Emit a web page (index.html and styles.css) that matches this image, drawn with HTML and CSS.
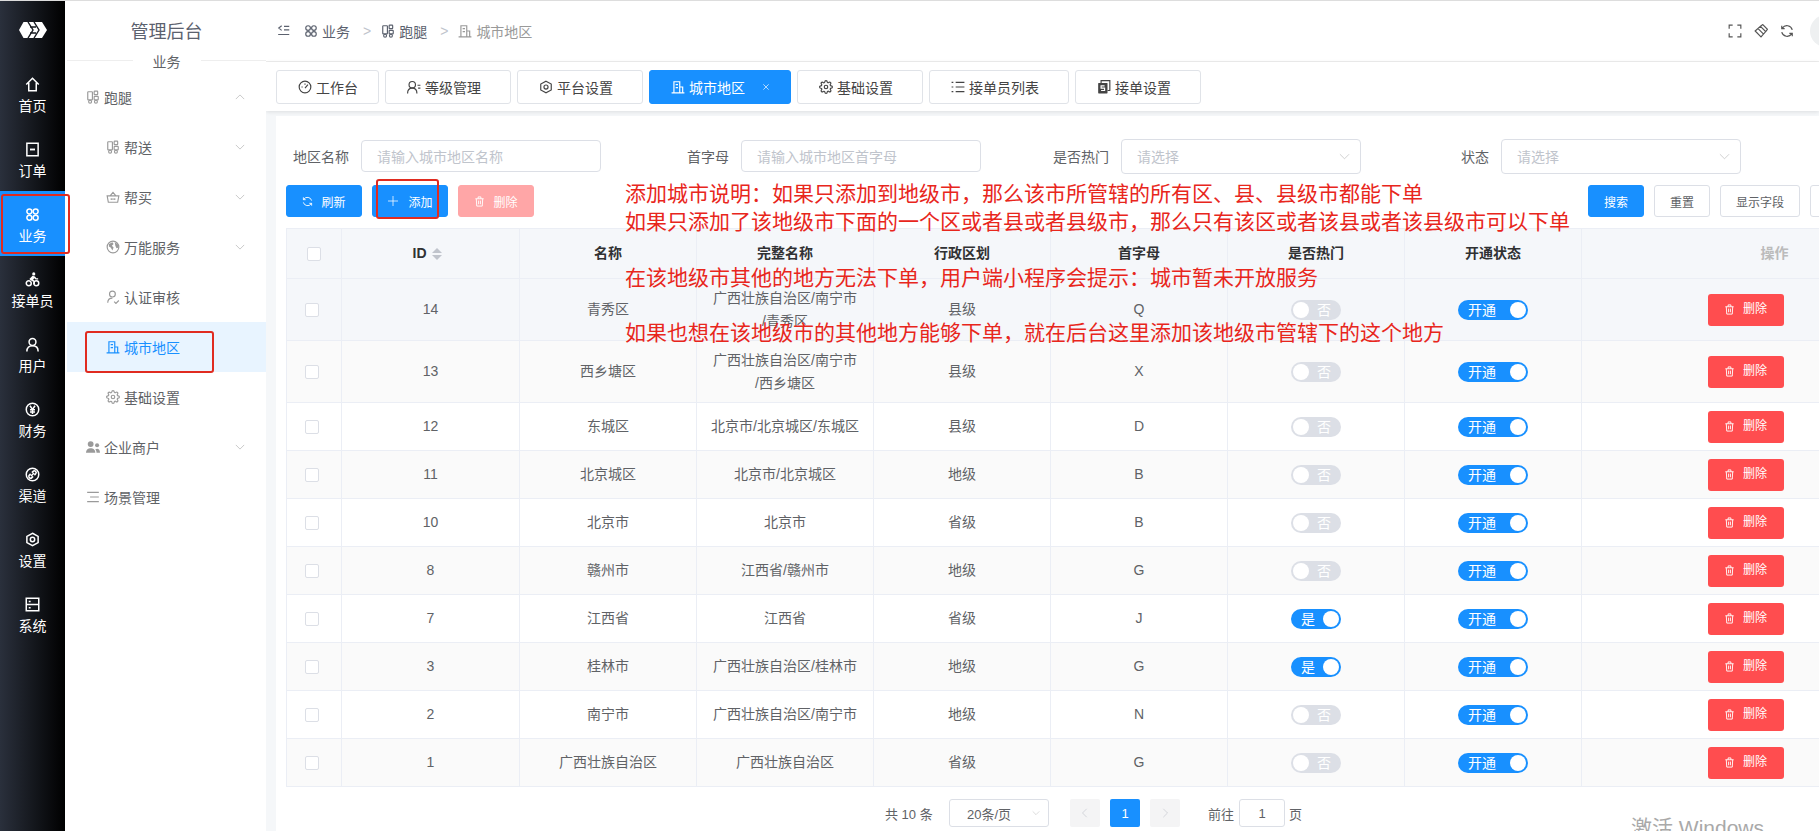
FILE: index.html
```html
<!DOCTYPE html>
<html lang="zh-CN">
<head>
    <meta charset="UTF-8" />
    <title>管理后台</title>
    <link rel="stylesheet" href="styles.css">
</head>
<body>
<!-- 图标 -->
<svg class="icon-defs" xmlns="http://www.w3.org/2000/svg">
    <symbol id="i-home" viewBox="0 0 24 24"><path d="M2 12L12 2l10 10M6 9v13h12V9"/></symbol>
    <symbol id="i-order" viewBox="0 0 24 24"><rect x="3" y="2" width="18" height="20"/><path d="M8 12h8" stroke-width="3"/></symbol>
    <symbol id="i-apps" viewBox="0 0 24 24"><circle cx="7" cy="7" r="4"/><circle cx="17" cy="7" r="4"/><circle cx="7" cy="17" r="4"/><circle cx="17" cy="17" r="4"/></symbol>
    <symbol id="i-rider" viewBox="0 0 24 24"><circle cx="6" cy="18" r="4"/><circle cx="18" cy="18" r="4"/><circle cx="14" cy="3" r="2.5" class="solid"/><path class="solid" d="M7 11l5-5 4 1 2 3h3v2h-4l-2-2-2 2 3 3v4h-2v-3l-5-3z"/></symbol>
    <symbol id="i-user" viewBox="0 0 24 24"><circle cx="12" cy="8" r="5.5"/><path d="M3 23c0-6 4-9 9-9s9 3 9 9"/></symbol>
    <symbol id="i-yen" viewBox="0 0 24 24"><circle cx="12" cy="12" r="10"/><path d="M8 6l4 6 4-6M12 12v7M8 12.5h8M8 16h8"/></symbol>
    <symbol id="i-link" viewBox="0 0 24 24"><circle cx="12" cy="12" r="10"/><path d="M9.5 14.5l5-5M9 11l-2 2a2.8 2.8 0 0 0 4 4l2-2M15 13l2-2a2.8 2.8 0 0 0-4-4l-2 2"/></symbol>
    <symbol id="i-hex" viewBox="0 0 24 24"><path d="M12 2l9 5v10l-9 5-9-5V7z"/><circle cx="12" cy="12" r="3.5"/></symbol>
    <symbol id="i-server" viewBox="0 0 24 24"><rect x="2" y="2" width="20" height="20"/><path d="M2 12h20M6 7h3M6 17h3"/></symbol>
    <symbol id="i-run" viewBox="0 0 24 24"><rect x="3" y="3" width="8" height="14" rx="1"/><rect x="14" y="2" width="6" height="6" rx="1"/><rect x="14" y="11" width="7" height="6" rx="1"/><circle cx="7" cy="20" r="2.5"/><circle cx="17" cy="20" r="2.5"/></symbol>
    <symbol id="i-basket" viewBox="0 0 24 24"><path d="M2 10h20l-2 11H4zM7 10l5-6 5 6M9 14v3M12 14v3M15 14v3"/></symbol>
    <symbol id="i-globe" viewBox="0 0 24 24"><circle cx="12" cy="12" r="10"/><path class="solid" d="M5 7l6-3 2 3-3 3 3 3-2 5-3-5-3-2zM15 4l5 3 2 6-4 1-2-4z"/></symbol>
    <symbol id="i-usercheck" viewBox="0 0 24 24"><circle cx="11" cy="7" r="5"/><path d="M3 22c0-5 3-8 8-8M14 20l3 3 5-5"/></symbol>
    <symbol id="i-building" viewBox="0 0 24 24"><path d="M5 21V3h10v18M15 12h5v9M8 8h4M8 13h4M1 22h22"/></symbol>
    <symbol id="i-gear" viewBox="0 0 24 24"><circle cx="12" cy="12" r="3"/><path d="M19.4 15a1.65 1.65 0 0 0 .33 1.82l.06.06a2 2 0 0 1 0 2.83 2 2 0 0 1-2.83 0l-.06-.06a1.65 1.65 0 0 0-1.82-.33 1.65 1.65 0 0 0-1 1.51V21a2 2 0 0 1-2 2 2 2 0 0 1-2-2v-.09A1.65 1.65 0 0 0 9 19.4a1.65 1.65 0 0 0-1.82.33l-.06.06a2 2 0 0 1-2.83 0 2 2 0 0 1 0-2.83l.06-.06a1.65 1.65 0 0 0 .33-1.82 1.65 1.65 0 0 0-1.51-1H3a2 2 0 0 1-2-2 2 2 0 0 1 2-2h.09A1.65 1.65 0 0 0 4.6 9a1.65 1.65 0 0 0-.33-1.82l-.06-.06a2 2 0 0 1 0-2.83 2 2 0 0 1 2.83 0l.06.06a1.65 1.65 0 0 0 1.82.33H9a1.65 1.65 0 0 0 1-1.51V3a2 2 0 0 1 2-2 2 2 0 0 1 2 2v.09a1.65 1.65 0 0 0 1 1.51 1.65 1.65 0 0 0 1.82-.33l.06-.06a2 2 0 0 1 2.83 0 2 2 0 0 1 0 2.83l-.06.06a1.65 1.65 0 0 0-.33 1.82V9a1.65 1.65 0 0 0 1.51 1H21a2 2 0 0 1 2 2 2 2 0 0 1-2 2h-.09a1.65 1.65 0 0 0-1.51 1z"/></symbol>
    <symbol id="i-users" viewBox="0 0 24 24"><circle class="solid" cx="8" cy="7" r="5"/><path class="solid" d="M0 22c0-6 4-8 8-8s8 2 8 8z"/><circle class="solid" cx="19" cy="9" r="3.5"/><path class="solid" d="M18 22h6c0-5-2-7-5-7-1 0-2 .3-3 1 1.500 2 2 4 2 6z"/></symbol>
    <symbol id="i-lines" viewBox="0 0 24 24"><path d="M2 4h20M7 12h15M2 20h20"/></symbol>
    <symbol id="i-collapse" viewBox="0 0 24 24"><path d="M8 3L3 7l5 4M12 4h9M12 10h9M2 18h19"/></symbol>
    <symbol id="i-gauge" viewBox="0 0 24 24"><circle cx="12" cy="12" r="10"/><path d="M12 14l5-6M6 12h2M12 6v2"/></symbol>
    <symbol id="i-userlines" viewBox="0 0 24 24"><circle cx="9" cy="8" r="5.500"/><path d="M1 23c0-6 3-9 8-9s8 3 8 9M18 9h5M19 14h4"/></symbol>
    <symbol id="i-list" viewBox="0 0 24 24"><path d="M8 4h15M8 12h15M8 20h15M1 4h3M1 12h3M1 20h3"/></symbol>
    <symbol id="i-copy" viewBox="0 0 24 24"><path d="M7 5V1h15v17h-4"/><rect class="solid" x="2" y="5" width="16" height="18" rx="1"/><path d="M13 10H7v4h6v4H7" stroke="#fff"/></symbol>
    <symbol id="i-full" viewBox="0 0 24 24"><path d="M2 8V2h6M16 2h6v6M22 16v6h-6M8 22H2v-6"/></symbol>
    <symbol id="i-clean" viewBox="0 0 24 24"><path d="M2 12l9-8 9 9-8 9zM7 8l9 9M11 4l4-3 8 8-3 4"/></symbol>
    <symbol id="i-refresh" viewBox="0 0 24 24"><path d="M21 10A9.500 9.500 0 0 0 4 7l-1 1M3 14a9.500 9.500 0 0 0 17 3l1-1M3 3v5h5M21 21v-5h-5"/></symbol>
    <symbol id="i-trash" viewBox="0 0 24 24"><path d="M3 6h18M9 6V2h6v4M5 6l1 16h12l1-16M10 10v8M14 10v8"/></symbol>
    <symbol id="i-down" viewBox="0 0 24 24"><path d="M2 7l10 10L22 7"/></symbol>
    <symbol id="i-up" viewBox="0 0 24 24"><path d="M2 17L12 7l10 10"/></symbol>
    <symbol id="i-left" viewBox="0 0 24 24"><path d="M16 2L6 12l10 10"/></symbol>
    <symbol id="i-right" viewBox="0 0 24 24"><path d="M8 2l10 10L8 22"/></symbol>
    <symbol id="i-plus" viewBox="0 0 24 24"><path d="M12 2v20M2 12h20"/></symbol>
    <symbol id="i-close" viewBox="0 0 24 24"><path d="M4 4l16 16M20 4L4 20"/></symbol>
</svg>

<div class="app">
    <!-- 一级菜单 -->
    <nav class="rail">
        <div class="rail-logo">
            <svg width="28" height="16" viewBox="0 0 28 16"><path fill="#fff" d="M0 8l4.500-8H23l5 8-5 8H4.500z"/><path fill="none" stroke="#15181e" stroke-width="1.400" d="M9 0l5 8-5 8M15 0l5 8-5 8M11 5h6M11 11h6"/></svg>
        </div>
        <a class="rail-item"><svg class="ico"><use href="#i-home"/></svg><span>首页</span></a>
        <a class="rail-item"><svg class="ico"><use href="#i-order"/></svg><span>订单</span></a>
        <a class="rail-item active"><svg class="ico"><use href="#i-apps"/></svg><span>业务</span></a>
        <a class="rail-item"><svg class="ico"><use href="#i-rider"/></svg><span>接单员</span></a>
        <a class="rail-item"><svg class="ico"><use href="#i-user"/></svg><span>用户</span></a>
        <a class="rail-item"><svg class="ico"><use href="#i-yen"/></svg><span>财务</span></a>
        <a class="rail-item"><svg class="ico"><use href="#i-link"/></svg><span>渠道</span></a>
        <a class="rail-item"><svg class="ico"><use href="#i-hex"/></svg><span>设置</span></a>
        <a class="rail-item"><svg class="ico"><use href="#i-server"/></svg><span>系统</span></a>
    </nav>

    <!-- 二级菜单 -->
    <aside class="side">
        <div class="side-title">管理后台</div>
        <div class="side-divider"><span>业务</span></div>
        <a class="side-item"><svg class="ico"><use href="#i-run"/></svg><span>跑腿</span><svg class="chev"><use href="#i-up"/></svg></a>
        <a class="side-item sub"><svg class="ico"><use href="#i-run"/></svg><span>帮送</span><svg class="chev"><use href="#i-down"/></svg></a>
        <a class="side-item sub"><svg class="ico"><use href="#i-basket"/></svg><span>帮买</span><svg class="chev"><use href="#i-down"/></svg></a>
        <a class="side-item sub"><svg class="ico"><use href="#i-globe"/></svg><span>万能服务</span><svg class="chev"><use href="#i-down"/></svg></a>
        <a class="side-item sub"><svg class="ico"><use href="#i-usercheck"/></svg><span>认证审核</span></a>
        <a class="side-item sub active"><svg class="ico"><use href="#i-building"/></svg><span>城市地区</span></a>
        <a class="side-item sub"><svg class="ico"><use href="#i-gear"/></svg><span>基础设置</span></a>
        <a class="side-item"><svg class="ico"><use href="#i-users"/></svg><span>企业商户</span><svg class="chev"><use href="#i-down"/></svg></a>
        <a class="side-item"><svg class="ico"><use href="#i-lines"/></svg><span>场景管理</span></a>
    </aside>

    <main class="main">
        <header class="topbar">
            <div class="crumbs">
                <svg class="ico collapse"><use href="#i-collapse"/></svg>
                <svg class="ico"><use href="#i-apps"/></svg><span>业务</span>
                <i class="sep">&gt;</i>
                <svg class="ico"><use href="#i-run"/></svg><span>跑腿</span>
                <i class="sep">&gt;</i>
                <svg class="ico last"><use href="#i-building"/></svg><span class="last">城市地区</span>
            </div>
            <div class="top-tools">
                <svg class="ico"><use href="#i-full"/></svg>
                <svg class="ico"><use href="#i-clean"/></svg>
                <svg class="ico"><use href="#i-refresh"/></svg>
                <div class="avatar"></div>
            </div>
        </header>

        <div class="tabs">
            <a class="tab tab-short"><svg class="ico"><use href="#i-gauge"/></svg>工作台</a>
            <a class="tab"><svg class="ico"><use href="#i-userlines"/></svg>等级管理</a>
            <a class="tab"><svg class="ico"><use href="#i-hex"/></svg>平台设置</a>
            <a class="tab active"><svg class="ico"><use href="#i-building"/></svg>城市地区<svg class="tab-close"><use href="#i-close"/></svg></a>
            <a class="tab"><svg class="ico"><use href="#i-gear"/></svg>基础设置</a>
            <a class="tab"><svg class="ico"><use href="#i-list"/></svg>接单员列表</a>
            <a class="tab"><svg class="ico"><use href="#i-copy"/></svg>接单设置</a>
        </div>

        <section class="panel">
            <div class="filters">
                <div class="filter"><label>地区名称</label><div class="input">请输入城市地区名称</div></div>
                <div class="filter"><label>首字母</label><div class="input">请输入城市地区首字母</div></div>
                <div class="filter"><label>是否热门</label><div class="input select">请选择<svg class="chev"><use href="#i-down"/></svg></div></div>
                <div class="filter"><label>状态</label><div class="input select">请选择<svg class="chev"><use href="#i-down"/></svg></div></div>
            </div>

            <div class="actions">
                <button class="btn primary wide"><svg class="ico"><use href="#i-refresh"/></svg>刷新</button>
                <button class="btn primary wide add"><svg class="ico plus"><use href="#i-plus"/></svg>添加</button>
                <button class="btn danger-off wide"><svg class="ico"><use href="#i-trash"/></svg>删除</button>
                <div class="actions-right">
                    <button class="btn primary">搜索</button>
                    <button class="btn">重置</button>
                    <button class="btn">显示字段</button>
                    <button class="btn"></button>
                </div>
            </div>

            <table class="grid">
                <colgroup>
                    <col class="c-check"><col class="c-id"><col class="c-data"><col class="c-data"><col class="c-data"><col class="c-data"><col class="c-data"><col class="c-data"><col>
                </colgroup>
                <thead>
                <tr>
                    <th><span class="check head"></span></th>
                    <th class="id-head">ID <span class="sort"><b></b><b></b></span></th>
                    <th>名称</th><th>完整名称</th><th>行政区划</th><th>首字母</th><th>是否热门</th><th>开通状态</th>
                    <th class="op">操作</th>
                </tr>
                </thead>
                <tbody>
                <tr class="tall hover">
                    <td><span class="check"></span></td><td>14</td><td>青秀区</td><td>广西壮族自治区/南宁市<br>/青秀区</td><td>县级</td><td>Q</td>
                    <td><span class="sw off"><i></i>否</span></td><td><span class="sw wide-sw">开通<i></i></span></td>
                    <td><button class="del"><svg class="ico"><use href="#i-trash"/></svg>删除</button></td>
                </tr>
                <tr class="tall stripe">
                    <td><span class="check"></span></td><td>13</td><td>西乡塘区</td><td>广西壮族自治区/南宁市<br>/西乡塘区</td><td>县级</td><td>X</td>
                    <td><span class="sw off"><i></i>否</span></td><td><span class="sw wide-sw">开通<i></i></span></td>
                    <td><button class="del"><svg class="ico"><use href="#i-trash"/></svg>删除</button></td>
                </tr>
                <tr>
                    <td><span class="check"></span></td><td>12</td><td>东城区</td><td>北京市/北京城区/东城区</td><td>县级</td><td>D</td>
                    <td><span class="sw off"><i></i>否</span></td><td><span class="sw wide-sw">开通<i></i></span></td>
                    <td><button class="del"><svg class="ico"><use href="#i-trash"/></svg>删除</button></td>
                </tr>
                <tr class="stripe">
                    <td><span class="check"></span></td><td>11</td><td>北京城区</td><td>北京市/北京城区</td><td>地级</td><td>B</td>
                    <td><span class="sw off"><i></i>否</span></td><td><span class="sw wide-sw">开通<i></i></span></td>
                    <td><button class="del"><svg class="ico"><use href="#i-trash"/></svg>删除</button></td>
                </tr>
                <tr>
                    <td><span class="check"></span></td><td>10</td><td>北京市</td><td>北京市</td><td>省级</td><td>B</td>
                    <td><span class="sw off"><i></i>否</span></td><td><span class="sw wide-sw">开通<i></i></span></td>
                    <td><button class="del"><svg class="ico"><use href="#i-trash"/></svg>删除</button></td>
                </tr>
                <tr class="stripe">
                    <td><span class="check"></span></td><td>8</td><td>赣州市</td><td>江西省/赣州市</td><td>地级</td><td>G</td>
                    <td><span class="sw off"><i></i>否</span></td><td><span class="sw wide-sw">开通<i></i></span></td>
                    <td><button class="del"><svg class="ico"><use href="#i-trash"/></svg>删除</button></td>
                </tr>
                <tr>
                    <td><span class="check"></span></td><td>7</td><td>江西省</td><td>江西省</td><td>省级</td><td>J</td>
                    <td><span class="sw">是<i></i></span></td><td><span class="sw wide-sw">开通<i></i></span></td>
                    <td><button class="del"><svg class="ico"><use href="#i-trash"/></svg>删除</button></td>
                </tr>
                <tr class="stripe">
                    <td><span class="check"></span></td><td>3</td><td>桂林市</td><td>广西壮族自治区/桂林市</td><td>地级</td><td>G</td>
                    <td><span class="sw">是<i></i></span></td><td><span class="sw wide-sw">开通<i></i></span></td>
                    <td><button class="del"><svg class="ico"><use href="#i-trash"/></svg>删除</button></td>
                </tr>
                <tr>
                    <td><span class="check"></span></td><td>2</td><td>南宁市</td><td>广西壮族自治区/南宁市</td><td>地级</td><td>N</td>
                    <td><span class="sw off"><i></i>否</span></td><td><span class="sw wide-sw">开通<i></i></span></td>
                    <td><button class="del"><svg class="ico"><use href="#i-trash"/></svg>删除</button></td>
                </tr>
                <tr class="stripe">
                    <td><span class="check"></span></td><td>1</td><td>广西壮族自治区</td><td>广西壮族自治区</td><td>省级</td><td>G</td>
                    <td><span class="sw off"><i></i>否</span></td><td><span class="sw wide-sw">开通<i></i></span></td>
                    <td><button class="del"><svg class="ico"><use href="#i-trash"/></svg>删除</button></td>
                </tr>
                </tbody>
            </table>

            <div class="pager">
                <span class="total">共 10 条</span>
                <div class="page-size">20条/页<svg class="chev"><use href="#i-down"/></svg></div>
                <span class="page-btn"><svg class="chev"><use href="#i-left"/></svg></span>
                <span class="page-btn current">1</span>
                <span class="page-btn"><svg class="chev"><use href="#i-right"/></svg></span>
                <span class="jump">前往</span>
                <span class="jump-input">1</span>
                <span>页</span>
            </div>
        </section>
    </main>
</div>

<!-- 截图上的红色标注 -->
<div class="mark mark-rail"></div>
<div class="mark mark-side"></div>
<div class="mark mark-add"></div>
<p class="note note-1">添加城市说明：如果只添加到地级市，那么该市所管辖的所有区、县、县级市都能下单</p>
<p class="note note-2">如果只添加了该地级市下面的一个区或者县或者县级市，那么只有该区或者该县或者该县级市可以下单</p>
<p class="note note-3">在该地级市其他的地方无法下单，用户端小程序会提示：城市暂未开放服务</p>
<p class="note note-4">如果也想在该地级市的其他地方能够下单，就在后台这里添加该地级市管辖下的这个地方</p>
<div class="watermark">激活 Windows</div>
</body>
</html>
```
FILE: styles.css
```css
/* 全局 */
* {
    box-sizing: border-box;
}
html, body {
    height: 100%;
}
body {
    margin: 0;
    overflow: hidden;
    background: #fff;
    color: #606266;
    font-family: "Liberation Sans", "Noto Sans CJK SC", sans-serif;
    font-size: 14px;
}
.icon-defs {
    position: absolute;
    width: 0;
    height: 0;
}
.ico, .chev, .tab-close {
    fill: none;
    stroke: currentColor;
    stroke-width: 2;
    flex: none;
}
.ico {
    width: 14px;
    height: 14px;
}
.chev {
    width: 10px;
    height: 10px;
    stroke-width: 1.500;
}
.solid {
    fill: currentColor;
    stroke: none;
}
.app {
    display: flex;
    height: 100%;
    border-top: 1px solid #ddd;
}

/* 一级菜单 */
.rail {
    width: 65px;
    flex: none;
    background: linear-gradient(90deg, #2a303c, #000);
    color: #fff;
}
.rail-logo {
    height: 60px;
    display: flex;
    align-items: center;
    justify-content: center;
    padding-bottom: 3px;
}
.rail-item {
    height: 65px;
    padding-top: 16px;
    display: flex;
    flex-direction: column;
    align-items: center;
}
.rail-item .ico {
    width: 15px;
    height: 15px;
    margin-bottom: 4px;
    stroke-width: 2.400;
}
.rail-item span {
    line-height: 20px;
}
.rail-item.active {
    background: #1890ff;
}

/* 二级菜单 */
.side {
    width: 201px;
    flex: none;
    padding-left: 2px;
}
.side-title {
    height: 48px;
    padding-top: 14px;
    text-align: center;
    font-size: 18px;
    line-height: 34px;
    color: #5b616e;
}
.side-divider {
    height: 23px;
    display: flex;
    align-items: center;
    gap: 20px;
}
.side-divider::before, .side-divider::after {
    content: "";
    flex: 1;
    height: 1px;
    background: #eee;
}
.side-item {
    height: 50px;
    display: flex;
    align-items: center;
    gap: 4px;
    padding: 0 21px 0 19px;
}
.side-item .ico {
    color: #9a9a9a;
}
.side-item.sub {
    padding-left: 39px;
}
.side-item .chev {
    margin-left: auto;
    color: #aaa;
}
.side-item.active {
    background: #e8f4ff;
    color: #1890ff;
}
.side-item.active .ico {
    color: #1890ff;
}

/* 顶部 */
.main {
    flex: 1;
    min-width: 0;
    background: #f5f7f9;
    overflow: hidden;
}
.topbar {
    height: 61px;
    padding-left: 11px;
    display: flex;
    align-items: center;
    justify-content: space-between;
    background: #fff;
    border-bottom: 1px solid #eee;
}
.crumbs {
    display: flex;
    align-items: center;
    gap: 4px;
    color: #5b616e;
}
.crumbs .collapse {
    margin-right: 9px;
}
.crumbs .sep {
    margin: 0 6px 0 9px;
    font-style: normal;
    color: #c0c4cc;
}
.crumbs .last {
    color: #999;
}
.top-tools {
    display: flex;
    align-items: center;
    gap: 12px;
    margin-right: -23px;
    color: #555;
}
.avatar {
    width: 32px;
    height: 32px;
    margin-left: 4px;
    border-radius: 50%;
    background: #eef0f1;
}

/* 标签页 */
.tabs {
    height: 49px;
    padding: 8px 0 0 10px;
    display: flex;
    gap: 6px;
    background: #fff;
    box-shadow: 0 1px 4px rgba(0, 0, 0, .1);
    position: relative;
}
.tab {
    height: 34px;
    padding: 0 29px 0 21px;
    display: flex;
    align-items: center;
    gap: 4px;
    border: 1px solid #e0e3e8;
    border-radius: 3px;
    color: #444;
}
.tab-short {
    padding-right: 20px;
}
.tab.active {
    padding-right: 20px;
    background: #1890ff;
    border-color: #1890ff;
    color: #fff;
}
.tab-close {
    width: 8px;
    height: 8px;
    margin-left: 13px;
    stroke-width: 2;
}

/* 内容区 */
.panel {
    width: 1644px;
    height: 100%;
    margin: 5px 0 0 10px;
    padding: 24px 10px 0;
    background: #fff;
}
.filters {
    display: grid;
    grid-template-columns: repeat(4, 380px);
    grid-template-rows: 32px;
}
.filter {
    display: flex;
    align-items: center;
}
.filter label {
    width: 75px;
    padding-right: 12px;
    text-align: right;
}
.input {
    width: 240px;
    height: 32px;
    padding-left: 15px;
    display: flex;
    align-items: center;
    border: 1px solid #dcdfe6;
    border-radius: 4px;
    color: #c0c4cc;
}
.input.select {
    height: 35px;
    justify-content: space-between;
    padding-right: 10px;
}
.input .chev {
    width: 11px;
    height: 11px;
    color: #bbb;
}
.actions {
    margin-top: 13px;
    display: flex;
    gap: 10px;
}
.actions-right {
    margin-left: auto;
    display: flex;
    gap: 10px;
}
.btn {
    height: 32px;
    padding: 0 15px;
    display: flex;
    align-items: center;
    justify-content: center;
    gap: 8px;
    border: 1px solid #dcdfe6;
    border-radius: 3px;
    background: #fff;
    color: #606266;
    font: inherit;
    font-size: 12px;
}
.btn .ico {
    width: 11px;
    height: 11px;
}
.btn .plus {
    width: 12px;
    height: 12px;
    stroke-width: 1.500;
}
.btn.add {
    gap: 9px;
}
.btn.wide {
    width: 76px;
    padding: 0;
}
.actions-right .btn {
    min-width: 56px;
}
.actions-right .btn:last-child {
    width: 100px;
}
.btn.primary {
    background: #1890ff;
    border-color: #1890ff;
    color: #fff;
}
.btn.danger-off {
    background: #ffa6a7;
    border-color: #ffa6a7;
    color: #fff;
}

/* 表格 */
.grid {
    margin-top: 11px;
    width: 1624px;
    table-layout: fixed;
    border-collapse: separate;
    border-spacing: 0;
    border-top: 1px solid #ebeef5;
    border-left: 1px solid #ebeef5;
}
.c-check {
    width: 55px;
}
.c-id {
    width: 178px;
}
.c-data {
    width: 177px;
}
.grid th, .grid td {
    padding: 0;
    text-align: center;
    line-height: 23px;
    border-right: 1px solid #ebeef5;
    border-bottom: 1px solid #ebeef5;
}
.grid th {
    height: 50px;
    background: #f5f7fa;
    color: #303133;
    font-weight: 700;
}
.grid th.id-head {
    padding-right: 6px;
}
.grid th.op {
    color: #bbb;
    padding-left: 70px;
    padding-right: 12px;
}
.grid td {
    height: 48px;
}
.grid .tall td {
    height: 62px;
}
.grid .hover td {
    background: #f5f7fa;
}
.grid .stripe td {
    background: #fafafa;
}
.check {
    display: inline-block;
    width: 14px;
    height: 14px;
    margin-right: 4px;
    vertical-align: middle;
    border: 1px solid #dcdfe6;
    border-radius: 2px;
    background: #fff;
}
.check.head {
    margin-right: 0;
}
.sort {
    display: inline-flex;
    flex-direction: column;
    gap: 2px;
    margin-left: 2px;
    vertical-align: middle;
}
.sort b {
    width: 0;
    height: 0;
    border: 5px solid transparent;
    border-top: 0;
    border-bottom: 5px solid #c0c4cc;
}
.sort b:last-child {
    border-bottom: 0;
    border-top: 5px solid #c0c4cc;
}

/* 开关 */
.sw {
    display: inline-flex;
    align-items: center;
    justify-content: space-between;
    width: 50px;
    height: 20px;
    padding: 0 2px 0 10px;
    border-radius: 10px;
    background: #1890ff;
    color: #fff;
    line-height: 20px;
    vertical-align: middle;
}
.sw i {
    width: 16px;
    height: 16px;
    border-radius: 50%;
    background: #fff;
}
.sw.wide-sw {
    width: 70px;
}
.sw.off {
    padding: 0 10px 0 2px;
    background: #dcdfe6;
}

.del {
    width: 76px;
    height: 32px;
    display: inline-flex;
    align-items: center;
    justify-content: center;
    gap: 8px;
    border: 0;
    border-radius: 3px;
    background: #ff4d4f;
    color: #fff;
    font: inherit;
    font-size: 12px;
    vertical-align: middle;
}
.del .ico {
    width: 11px;
    height: 11px;
}

/* 分页 */
.pager {
    margin-top: 12px;
    padding-left: 599px;
    height: 28px;
    display: flex;
    align-items: center;
    font-size: 13px;
}
.total {
    width: 64px;
}
.page-size {
    width: 100px;
    height: 28px;
    padding: 0 8px 0 17px;
    display: flex;
    align-items: center;
    justify-content: space-between;
    border: 1px solid #dcdfe6;
    border-radius: 3px;
}
.page-size .chev {
    width: 8px;
    height: 8px;
    color: #bbb;
}
.page-btn {
    width: 30px;
    height: 28px;
    margin-left: 10px;
    display: flex;
    align-items: center;
    justify-content: center;
    border-radius: 2px;
    background: #f4f4f5;
    color: #c0c4cc;
}
.page-size + .page-btn {
    margin-left: 21px;
}
.page-btn.current {
    background: #1890ff;
    color: #fff;
}
.jump {
    margin-left: 28px;
}
.jump-input {
    width: 46px;
    height: 28px;
    margin: 0 4px 0 5px;
    display: flex;
    align-items: center;
    justify-content: center;
    border: 1px solid #dcdfe6;
    border-radius: 3px;
}

/* 红色标注 */
.mark {
    position: absolute;
    border: 2.500px solid #e02b20;
    border-radius: 3px;
}
.mark-rail {
    left: 1px;
    top: 194px;
    width: 69px;
    height: 60px;
}
.mark-side {
    left: 85px;
    top: 331px;
    width: 129px;
    height: 42px;
}
.mark-add {
    left: 376px;
    top: 179px;
    width: 63px;
    height: 40px;
}
.note {
    position: absolute;
    left: 625px;
    margin: 0;
    white-space: nowrap;
    color: #e8261c;
    font-size: 21px;
    line-height: 28px;
}
.note-1 { top: 180px; }
.note-2 { top: 208px; }
.note-3 { top: 264px; }
.note-4 { top: 319px; }
.watermark {
    position: absolute;
    left: 1631px;
    top: 814px;
    color: #a9a9a9;
    font-size: 21px;
    line-height: 28px;
    white-space: nowrap;
}
```
